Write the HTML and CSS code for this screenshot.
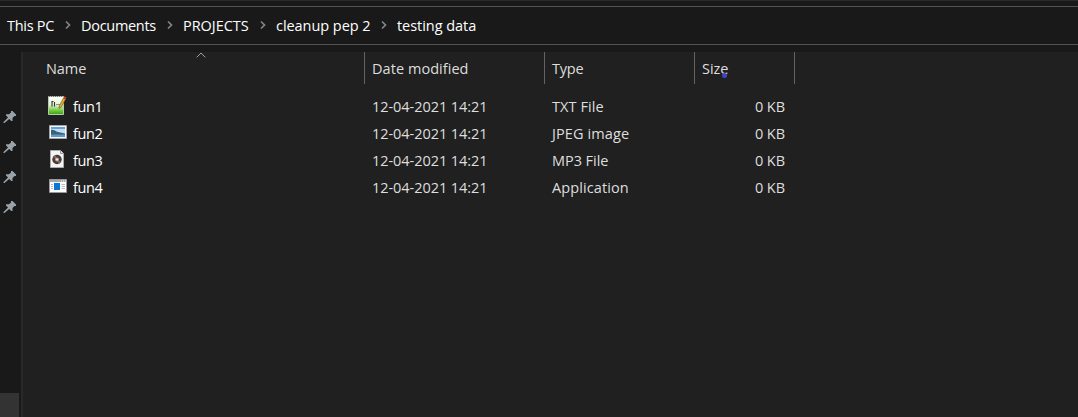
FILE: index.html
```html
<!DOCTYPE html>
<html lang="en">
<head>
<meta charset="utf-8">
<title>testing data</title>
<link rel="stylesheet" href="styles.css">
</head>
<body>
<svg width="0" height="0" class="defs">
  <symbol id="pin" viewBox="0 0 14 14"><path d="M8 1h1.500L13 4.500V6h-1.500L9.500 8v3H8.300L6.200 9 1.500 13H.5v-1L5 7.500 3 5.500V4.300h3L8 2.500z" fill="#98a2a8"/></symbol>
  <symbol id="chev" viewBox="0 0 6 10"><path d="M1 1.500l3.500 3.500L1 8.500" fill="none" stroke="#858585" stroke-width="1.700"/></symbol>
</svg>
<nav class="address">
  <span class="crumb c1">This PC</span><svg class="chev"><use href="#chev"/></svg>
  <span class="crumb c2">Documents</span><svg class="chev"><use href="#chev"/></svg>
  <span class="crumb c3">PROJECTS</span><svg class="chev"><use href="#chev"/></svg>
  <span class="crumb c4">cleanup pep 2</span><svg class="chev"><use href="#chev"/></svg>
  <span class="crumb c5">testing data</span>
</nav>
<div class="main">
  <aside class="side">
    <div class="pins">
      <svg><use href="#pin"/></svg><svg><use href="#pin"/></svg><svg><use href="#pin"/></svg><svg><use href="#pin"/></svg>
    </div>
    <div class="thumb"></div>
  </aside>
  <section class="files">
    <div class="row head">
      <div class="cell name"><span>Name</span><svg class="sort" viewBox="0 0 10 6"><path d="M.7 5.300L5 1l4.300 4.300" fill="none" stroke="#a0a0a0"/></svg></div>
      <div class="cell date"><span>Date modified</span></div>
      <div class="cell type"><span>Type</span></div>
      <div class="cell size"><span>Size</span><i class="dot"></i></div>
    </div>
    <div class="row">
      <div class="cell name"><svg class="icon" viewBox="0 0 20 20">
        <defs><linearGradient id="g" x2="0" y2="1"><stop offset="0" stop-color="#fff"/><stop offset=".45" stop-color="#e5f5d9"/><stop offset=".8" stop-color="#69c932"/><stop offset="1" stop-color="#369d18"/></linearGradient></defs>
        <path d="M.5 1.500h15v18H.5z" fill="url(#g)" stroke="#b8c9b1"/>
        <path d="M1 1.500h14" stroke="#777" stroke-dasharray="1 1"/>
        <path d="M4 11.500V6.500h1.500M6.500 7v4.500M8.500 9.500h1M10.500 9.500h1" fill="none" stroke="#333" stroke-width="1.100"/>
        <path d="M11 13.500l.5-3L15.500 3l2 1.200-4 7.500z" fill="#efae20" stroke="#5d4a20" stroke-width=".6"/><path d="M15.500 3l1-1.800 2 1.200-1 1.800z" fill="#d33a28"/></svg><span class="fn">fun1</span></div>
      <div class="cell date"><span>12-04-2021 14:21</span></div>
      <div class="cell type"><span>TXT File</span></div>
      <div class="cell size"><span>0 KB</span></div>
    </div>
    <div class="row">
      <div class="cell name"><svg class="icon" viewBox="0 0 20 20">
        <path d="M1.500 3.500h17v13h-17z" fill="#f8f8f8" stroke="#a5a5a5"/><path d="M3 5h14v10H3z" fill="#c3def2"/><path d="M3 5h14v2H3z" fill="#64a4dd"/><path d="M3 8c2-.5 4 .5 6 1.800l8 1.700v1.500H3z" fill="#3b6274"/><path d="M3 12.500h14V15H3z" fill="#5a9bcb"/></svg><span class="fn">fun2</span></div>
      <div class="cell date"><span>12-04-2021 14:21</span></div>
      <div class="cell type"><span>JPEG image</span></div>
      <div class="cell size"><span>0 KB</span></div>
    </div>
    <div class="row">
      <div class="cell name"><svg class="icon" viewBox="0 0 20 20">
        <path d="M2.500 1.500h10l3 3v14h-13z" fill="#f4f4f4" stroke="#aaa"/><path d="M12.500 1.500v3h3" fill="#ddd" stroke="#999"/><circle cx="9" cy="10.500" r="4.700" fill="#443c40"/><path d="M9 10.500L5 8A4.700 4.700 0 0 1 7.500 6.100zM9 10.500l4 2.500a4.700 4.700 0 0 1-2.500 2z" fill="#75686a"/><circle cx="9" cy="10.500" r="1.900" fill="#e5a182"/><circle cx="9" cy="10.500" r=".8" fill="#fff"/></svg><span class="fn">fun3</span></div>
      <div class="cell date"><span>12-04-2021 14:21</span></div>
      <div class="cell type mp3"><span>MP3 File</span></div>
      <div class="cell size"><span>0 KB</span></div>
    </div>
    <div class="row">
      <div class="cell name"><svg class="icon" viewBox="0 0 20 20">
        <path d="M1.500 3.500h17v13h-17z" fill="#fff" stroke="#999"/><path d="M2 4h16v2H2z" fill="#a4a9ac"/><path d="M13 5h1M15 5h1M17 5h1" stroke="#fff"/><path d="M6 7h6v7H6z" fill="#0878d4"/><path d="M3 8.500h2M3 10.500h2M3 12.500h2M13.500 8.500H17M13.500 10.500H17M13.500 12.500H17" stroke="#b5bdc4"/></svg><span class="fn">fun4</span></div>
      <div class="cell date"><span>12-04-2021 14:21</span></div>
      <div class="cell type"><span>Application</span></div>
      <div class="cell size"><span>0 KB</span></div>
    </div>
  </section>
</div>
</body>
</html>
```
FILE: styles.css
```css
* { box-sizing: border-box; }
body { margin: 0; height: 417px; display: flex; flex-direction: column; overflow: hidden; background: #191919; border-top: 1px solid #2b2b2b; font: 14.500px/20px "Open Sans", "Noto Sans", sans-serif; letter-spacing: -.05px; color: #dedede; }
.defs { position: absolute; }
span { white-space: nowrap; }
.address { flex: none; display: flex; align-items: center; height: 39px; margin-top: 5px; border-top: 1px solid #535353; border-bottom: 1px solid #535353; padding-left: 7px; color: #fff; }
.chev { width: 6px; height: 10px; flex: none; margin: 0 10px 2px 0; }
.crumb { flex: none; }
.c1 { width: 58px; letter-spacing: -.3px; }
.c2 { width: 86px; letter-spacing: -.3px; }
.c3 { width: 77px; }
.c4 { width: 105px; }
.main { flex: 1; display: flex; margin-top: 7px; }
.side { width: 21px; display: flex; flex-direction: column; justify-content: space-between; }
.pins { display: flex; flex-direction: column; gap: 16px; padding: 58px 0 0 3px; }
.pins svg { width: 14px; height: 14px; }
.thumb { width: 19px; height: 24px; background: #333; }
.files { flex: 1; background: #202020; border-left: 2px solid #292929; }
.row { display: flex; height: 27px; }
.cell { display: flex; align-items: center; padding-left: 7px; }
.name { width: 342px; padding-left: 25px; }
.date { width: 180px; }
.type { width: 150px; letter-spacing: .1px; }
.mp3 { letter-spacing: -.05px; }
.size { width: 100px; justify-content: flex-end; padding-right: 10px; }
.head { height: 32px; margin-bottom: 9px; }
.head .cell { position: relative; border-right: 1px solid #636363; padding-top: 2px; }
.head .name { padding-left: 23px; }
.head .date { letter-spacing: .05px; }
.head .type { letter-spacing: -.2px; }
.head .size { justify-content: flex-start; }
.sort { position: absolute; left: 173px; top: 0; width: 10px; height: 6px; }
.dot { position: absolute; left: 27px; top: 21px; width: 5px; height: 5px; border-radius: 50%; background: #3c45c8; }
.icon { width: 20px; height: 20px; margin: 0 5px 3px 0; flex: none; }
.fn { color: #fff; letter-spacing: -.35px; }
```
